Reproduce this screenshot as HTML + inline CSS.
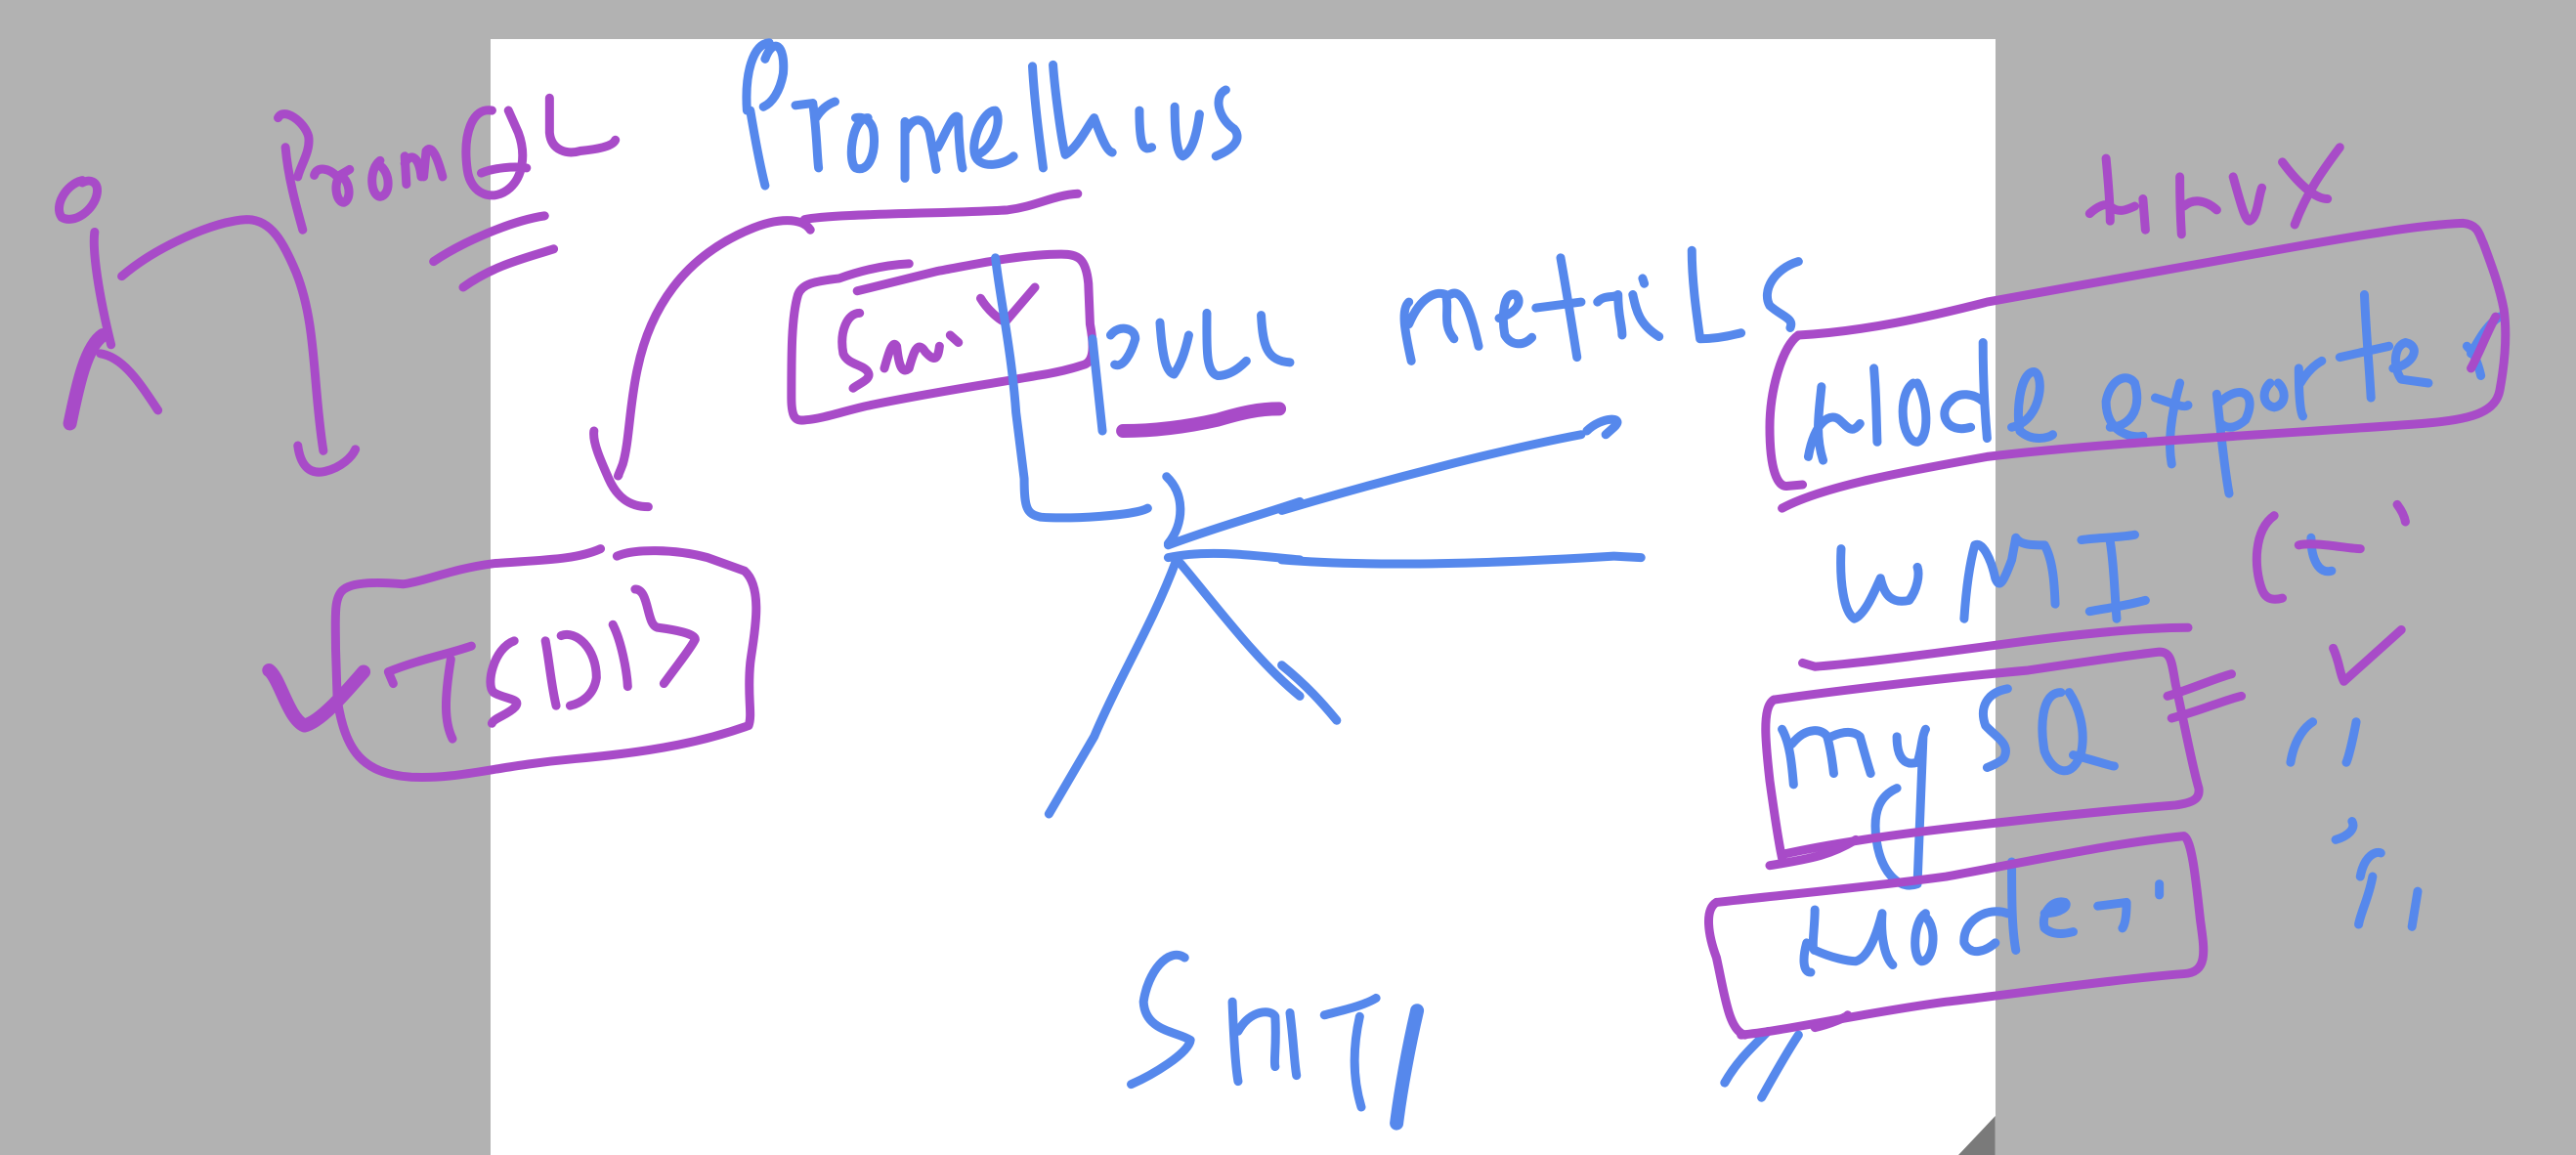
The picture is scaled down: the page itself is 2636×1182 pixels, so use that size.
<!DOCTYPE html>
<html><head><meta charset="utf-8"><style>
html,body{margin:0;padding:0;width:2636px;height:1182px;overflow:hidden;background:#b2b2b2;font-family:"Liberation Sans",sans-serif}
.page{position:absolute;left:502px;top:40px;width:1540px;height:1142px;background:#fff}
svg{position:absolute;top:0;height:1182px;overflow:visible}
path{fill:none;stroke-linecap:round;stroke-linejoin:round;vector-effect:non-scaling-stroke;stroke-width:9}
.p path{stroke:#a84bc8}
.b path{stroke:#5688ec}
path.t{stroke-width:14}
</style></head><body>
<div class="page"></div>
<svg style="left:0;width:1320px" viewBox="0 0 1568 1568" preserveAspectRatio="none">
<g class="p">
<path d="M100,245 C80,250 65,280 75,295 C90,305 115,285 118,262 C120,245 108,243 100,248"/>
<path d="M115,315 C112,340 120,400 135,468"/>
<path class="t" d="M125,455 C105,470 95,520 85,575"/>
<path d="M122,480 C150,485 170,520 192,557"/>
<path d="M148,375 C190,335 260,300 300,298 C330,298 345,330 360,370 C385,440 380,520 393,612"/>
<path d="M362,605 C365,630 375,645 395,640 C415,635 428,620 432,610"/>
<path d="M338,160 C345,145 370,165 375,185 C378,205 365,225 362,240"/>
<path d="M347,200 C350,240 360,280 368,312"/>
<path d="M382,238 C385,225 400,228 410,240 L425,230"/>
<path d="M412,240 C405,255 410,275 418,275 C428,270 425,245 415,240"/>
<path d="M462,218 C448,230 450,265 462,267 C475,265 475,235 462,225"/>
<path d="M494,250 L492,212 M492,222 C500,205 510,215 512,240 M515,240 L518,205 C525,195 532,215 538,240"/>
<path d="M598,150 C575,145 562,180 568,230 C572,265 600,275 620,255 C635,240 640,210 630,180 L618,150 M585,235 C600,228 625,225 640,228"/>
<path d="M668,133 L668,180 C670,205 690,210 705,205 C730,202 745,198 748,190"/>
<path d="M527,355 C560,330 620,300 662,293"/>
<path d="M563,390 C600,360 640,350 673,338"/>
<path d="M985,312 C975,295 945,295 910,312 C830,350 790,420 775,500 C765,550 765,600 757,630 C752,645 750,648 752,645"/>
<path d="M722,585 C720,600 730,625 740,650 C750,675 765,688 788,688"/>
<path d="M978,298 C1010,290 1150,290 1225,285 C1260,280 1280,265 1310,263"/>
<path d="M1105,358 C1070,360 1040,370 1020,378 C990,382 975,385 970,400 C962,430 962,480 962,540 C962,570 968,572 980,570 C1000,568 1020,560 1050,552 C1120,535 1200,522 1260,510 C1290,505 1310,498 1318,495 C1330,490 1330,470 1325,440 L1323,385 C1320,350 1310,345 1290,345 C1240,345 1180,360 1140,368 L1042,395"/>
<path d="M1045,425 C1030,425 1020,450 1025,480 C1030,495 1050,495 1055,505 C1060,515 1045,520 1037,527"/>
<path d="M1075,500 C1080,480 1085,460 1090,470 C1092,490 1095,510 1105,500 C1110,480 1115,460 1125,478 C1135,490 1140,490 1142,470 M1155,455 L1165,465"/>
<path d="M1192,405 C1200,420 1215,435 1222,437 L1258,390"/>
<path class="t" d="M1365,585 C1400,585 1440,580 1480,570 C1510,560 1530,555 1555,555"/>
<path d="M730,745 C700,760 660,760 600,765 C550,772 515,790 490,793 C460,790 430,790 418,800 C405,810 408,840 408,880 L410,950 C420,1020 440,1050 500,1055 C560,1058 600,1040 700,1030 C800,1020 860,1005 910,985 C915,970 908,945 912,900 C915,870 930,800 905,775 L860,757 C820,745 770,745 750,755"/>
<path class="t" d="M327,910 C340,920 350,975 370,985 C390,980 420,940 442,912"/>
<path d="M478,928 L472,912 C510,895 545,888 573,877 M548,895 C540,950 540,980 550,1003"/>
<path d="M625,870 C600,880 590,930 600,940 C615,950 635,948 626,960 C618,970 600,975 598,982"/>
<path d="M663,870 C668,900 670,930 676,958 M682,863 C700,855 725,880 725,920 C722,945 705,955 693,958"/>
<path d="M745,848 C755,870 762,910 763,932"/>
<path d="M772,800 C790,800 785,850 800,852 C820,855 845,860 845,868 C840,880 825,900 807,928"/>
</g>
<g class="b">
<path d="M930,80 C940,50 955,60 952,100 C948,125 938,140 928,145 M908,150 C905,100 915,60 935,58 M912,150 C918,190 925,230 930,252"/>
<path d="M967,143 L988,140 C993,180 993,210 995,228 M992,160 C1000,145 1010,140 1015,138"/>
<path d="M1055,160 C1035,160 1030,220 1040,228 C1055,235 1065,210 1062,180 C1060,162 1048,158 1040,160"/>
<path d="M1100,242 L1100,165 M1100,180 C1110,155 1125,160 1130,180 L1138,230 M1140,200 C1150,180 1160,150 1165,160 C1165,190 1168,220 1170,228"/>
<path d="M1188,210 C1210,200 1218,160 1210,150 C1195,150 1180,190 1185,210 C1190,230 1220,225 1232,212"/>
<path d="M1255,90 C1258,150 1265,200 1268,228 M1280,88 C1282,120 1290,190 1295,210 C1310,200 1320,175 1330,160 C1338,185 1345,205 1352,207"/>
<path d="M1385,150 C1385,200 1390,205 1400,200 M1428,145 C1428,180 1430,210 1438,212 C1450,205 1455,180 1458,155"/>
<path d="M1490,122 C1475,130 1480,160 1500,175 C1508,185 1505,200 1478,212"/>
<path d="M1210,350 C1215,400 1230,480 1235,560 L1245,650 C1245,690 1248,698 1265,702 C1300,705 1380,700 1395,690"/>
<path d="M1328,460 L1340,585"/>
<path d="M1350,455 C1360,440 1380,445 1380,460 C1375,480 1365,500 1355,495 M1410,438 C1412,470 1415,505 1427,508 C1435,495 1440,480 1445,455 M1467,425 C1467,470 1465,505 1480,510 C1490,510 1502,505 1515,490 M1533,428 C1535,470 1540,490 1568,492"/>
<path d="M1418,647 C1440,670 1440,710 1420,738 M1420,740 C1480,715 1530,700 1580,681 M1420,757 C1470,745 1530,755 1580,760 M1430,760 C1400,850 1360,920 1330,1000 L1275,1105 M1435,765 C1480,825 1530,900 1580,945"/>
<path d="M1440,1300 C1420,1285 1395,1320 1390,1360 C1392,1400 1430,1400 1447,1412 C1445,1430 1400,1460 1375,1472"/>
<path d="M1498,1360 C1500,1420 1502,1450 1505,1468 M1505,1400 C1520,1370 1545,1370 1550,1380 C1552,1420 1548,1440 1550,1448"/>
</g>
</svg>
<svg style="left:1320px;width:1316px" viewBox="0 0 1568 1568" preserveAspectRatio="none">
<polygon points="815,1568 860,1515 860,1568" fill="#7a7a7a"/>
<g class="b">
<path d="M-10,693 C120,650 260,610 355,590 M362,585 C380,565 410,565 395,580 C390,585 385,590 385,590 M-10,760 C100,770 250,765 395,755 L428,757 M-10,903 C20,930 40,955 57,978"/>
<path d="M0,1375 C5,1420 5,1440 8,1460 M42,1378 C70,1370 90,1365 105,1355 M85,1380 C75,1430 78,1470 87,1503"/>
<path class="t" d="M155,1372 C145,1420 135,1480 130,1525"/>
<path d="M148,490 C140,450 135,420 145,410 M145,440 C160,400 180,395 190,400 C195,420 185,440 200,460 M195,400 C210,390 220,420 230,470"/>
<path d="M255,432 C275,425 285,410 275,400 C260,395 258,430 262,455 C270,470 285,470 295,458"/>
<path d="M330,350 C338,400 345,450 350,485 M300,418 L355,410"/>
<path d="M375,410 C382,400 395,405 400,400 C400,430 405,440 405,455 M430,378 L432,385 M418,400 C422,420 425,440 450,457"/>
<path d="M490,340 C490,380 495,420 500,460 C520,460 540,455 550,452 M620,355 C590,365 575,395 585,415 C600,430 615,432 610,445"/>
<path d="M648,525 C645,560 640,590 650,625 M632,620 C640,570 660,560 670,570 C680,580 685,590 695,575 M712,500 C715,540 715,570 716,600"/>
<path d="M760,520 C740,535 745,600 765,600 C780,595 778,545 765,520"/>
<path d="M845,465 C845,520 848,570 850,595 M830,580 C800,590 790,560 805,545 C815,530 835,535 845,545"/>
<path d="M880,580 C920,570 920,500 905,505 C890,510 885,560 890,585 C905,600 925,595 930,590"/>
<path d="M1000,580 C1020,580 1040,560 1030,520 C1020,505 1000,515 995,545 C995,590 1030,595 1040,592"/>
<path d="M1055,540 C1070,545 1090,555 1095,550 M1085,520 C1075,560 1070,600 1075,630"/>
<path d="M1130,535 C1135,590 1140,640 1145,670 M1135,545 C1160,520 1180,535 1165,570 C1150,585 1140,580 1135,575"/>
<path d="M1195,520 C1185,530 1185,550 1200,553 C1215,550 1215,530 1205,520 M1230,500 C1230,540 1232,560 1235,565 M1232,520 C1240,505 1250,495 1258,490"/>
<path d="M1310,400 C1312,450 1316,500 1318,540 M1280,485 L1340,470 M1345,500 C1370,495 1380,470 1360,465 C1345,470 1345,500 1355,515 L1388,520"/>
<path d="M1435,470 C1445,480 1450,500 1452,510 M1440,480 C1450,460 1460,440 1475,430"/>
<path d="M672,745 C670,790 675,830 688,840 C700,835 710,810 720,785 C725,810 735,820 755,815 C765,800 768,780 765,770"/>
<path d="M822,840 C825,790 830,760 835,740 C845,735 855,760 860,785 C865,800 870,790 880,760 L885,730 C890,740 905,740 920,740 C930,760 932,790 933,820"/>
<path d="M965,733 C980,730 1010,730 1030,726 M1000,735 C1005,770 1005,800 1008,840 M975,830 C1000,825 1020,822 1043,815"/>
<path d="M600,990 C610,1010 612,1040 614,1065 M612,1010 C630,985 650,990 655,1000 C660,1020 662,1040 663,1050 M660,1000 C680,990 690,995 695,1000 C700,1020 705,1040 708,1050"/>
<path d="M740,1000 C740,1030 750,1040 765,1035 C770,1020 770,1000 775,990 M772,1000 C770,1050 768,1120 765,1200 C740,1210 720,1180 715,1140 C710,1100 720,1080 740,1070"/>
<path d="M875,935 C850,940 840,960 848,985 C860,1000 880,1010 870,1030 C865,1035 855,1040 850,1042"/>
<path d="M940,940 C915,940 915,990 920,1020 C930,1050 955,1060 965,1020 C970,990 962,960 950,940 M955,1025 C975,1030 1000,1040 1005,1040"/>
<path d="M630,1280 C625,1300 625,1320 635,1320 M640,1235 C640,1260 635,1290 640,1290 C660,1300 680,1305 690,1305 C705,1300 715,1270 722,1240 C720,1270 725,1300 735,1310"/>
<path d="M775,1240 C760,1250 758,1300 770,1305 C785,1305 790,1260 775,1245"/>
<path d="M880,1170 C880,1220 880,1260 885,1290 M875,1240 C850,1230 820,1250 822,1280 C830,1300 850,1290 860,1280"/>
<path d="M920,1240 C940,1240 950,1230 945,1225 C930,1220 915,1240 920,1260 C930,1270 945,1268 955,1265"/>
<path d="M985,1230 L1020,1225 C1020,1245 1018,1255 1015,1260 M1060,1200 L1060,1215"/>
<path d="M530,1470 C545,1440 565,1420 583,1400 M575,1490 C590,1460 605,1430 620,1405"/>
<path d="M1220,1035 C1225,1000 1240,985 1247,980 M1300,980 C1295,1010 1290,1030 1288,1035 M1275,1140 C1290,1135 1300,1125 1295,1115"/>
<path d="M1305,1190 C1310,1160 1325,1155 1330,1158 M1320,1190 C1315,1220 1305,1240 1303,1255 M1375,1210 C1372,1230 1370,1245 1368,1258"/>
<path d="M1245,730 C1245,760 1255,780 1270,775"/>
</g>
<g class="p">
<path d="M995,215 C998,250 1000,280 1000,300 M975,290 C985,280 995,275 1000,280 C1010,290 1020,285 1030,280 M1040,270 L1043,312"/>
<path d="M1085,240 C1085,270 1086,300 1087,318 M1090,280 C1100,270 1115,270 1130,285 M1150,240 C1160,280 1165,300 1170,300 C1180,295 1180,270 1185,255"/>
<path d="M1210,220 C1230,250 1250,270 1265,270 M1280,200 C1260,230 1240,260 1225,305"/>
<path d="M620,455 C700,450 780,430 850,410 L1200,340 C1300,320 1380,305 1430,303 C1450,305 1450,320 1455,330 C1465,360 1475,390 1480,420 C1485,460 1480,500 1475,530 C1470,560 1440,570 1380,575 C1200,590 1000,600 850,620 C750,640 650,660 600,690"/>
<path d="M620,455 C600,470 585,530 585,580 C585,640 595,660 605,660 L625,658 M1440,500 C1450,480 1460,450 1470,430"/>
<path d="M1200,700 C1175,720 1175,770 1185,800 C1190,815 1200,815 1210,812 M1230,740 C1250,735 1290,745 1305,745 M1350,685 C1360,700 1360,710 1360,708"/>
<path d="M1272,880 C1280,900 1280,915 1285,925 C1310,900 1335,875 1355,855"/>
<path d="M625,900 L640,905 C700,900 800,885 900,870 C970,860 1040,852 1095,852"/>
<path d="M590,950 C650,940 800,920 900,910 C960,900 1020,890 1060,885 C1075,885 1075,900 1080,930 C1090,980 1100,1040 1108,1070 C1110,1085 1100,1090 1080,1093 C1000,1100 900,1112 800,1125 C700,1138 640,1150 600,1160"/>
<path d="M590,950 C575,960 580,1010 585,1060 C590,1100 595,1140 600,1165 M585,1175 C640,1165 660,1160 690,1140"/>
<path d="M1070,945 C1100,935 1130,920 1148,915 M1075,975 C1110,965 1140,950 1160,945"/>
<path d="M520,1225 C600,1215 700,1205 800,1190 C900,1170 1000,1145 1090,1135 C1100,1140 1105,1200 1110,1250 C1115,1290 1120,1320 1090,1322 C1000,1330 880,1350 800,1360 C700,1375 600,1400 550,1405"/>
<path d="M520,1225 C505,1235 510,1270 520,1300 C530,1350 535,1400 555,1405 M640,1395 C660,1390 680,1380 680,1378"/>
</g>
</svg>
</body></html>
